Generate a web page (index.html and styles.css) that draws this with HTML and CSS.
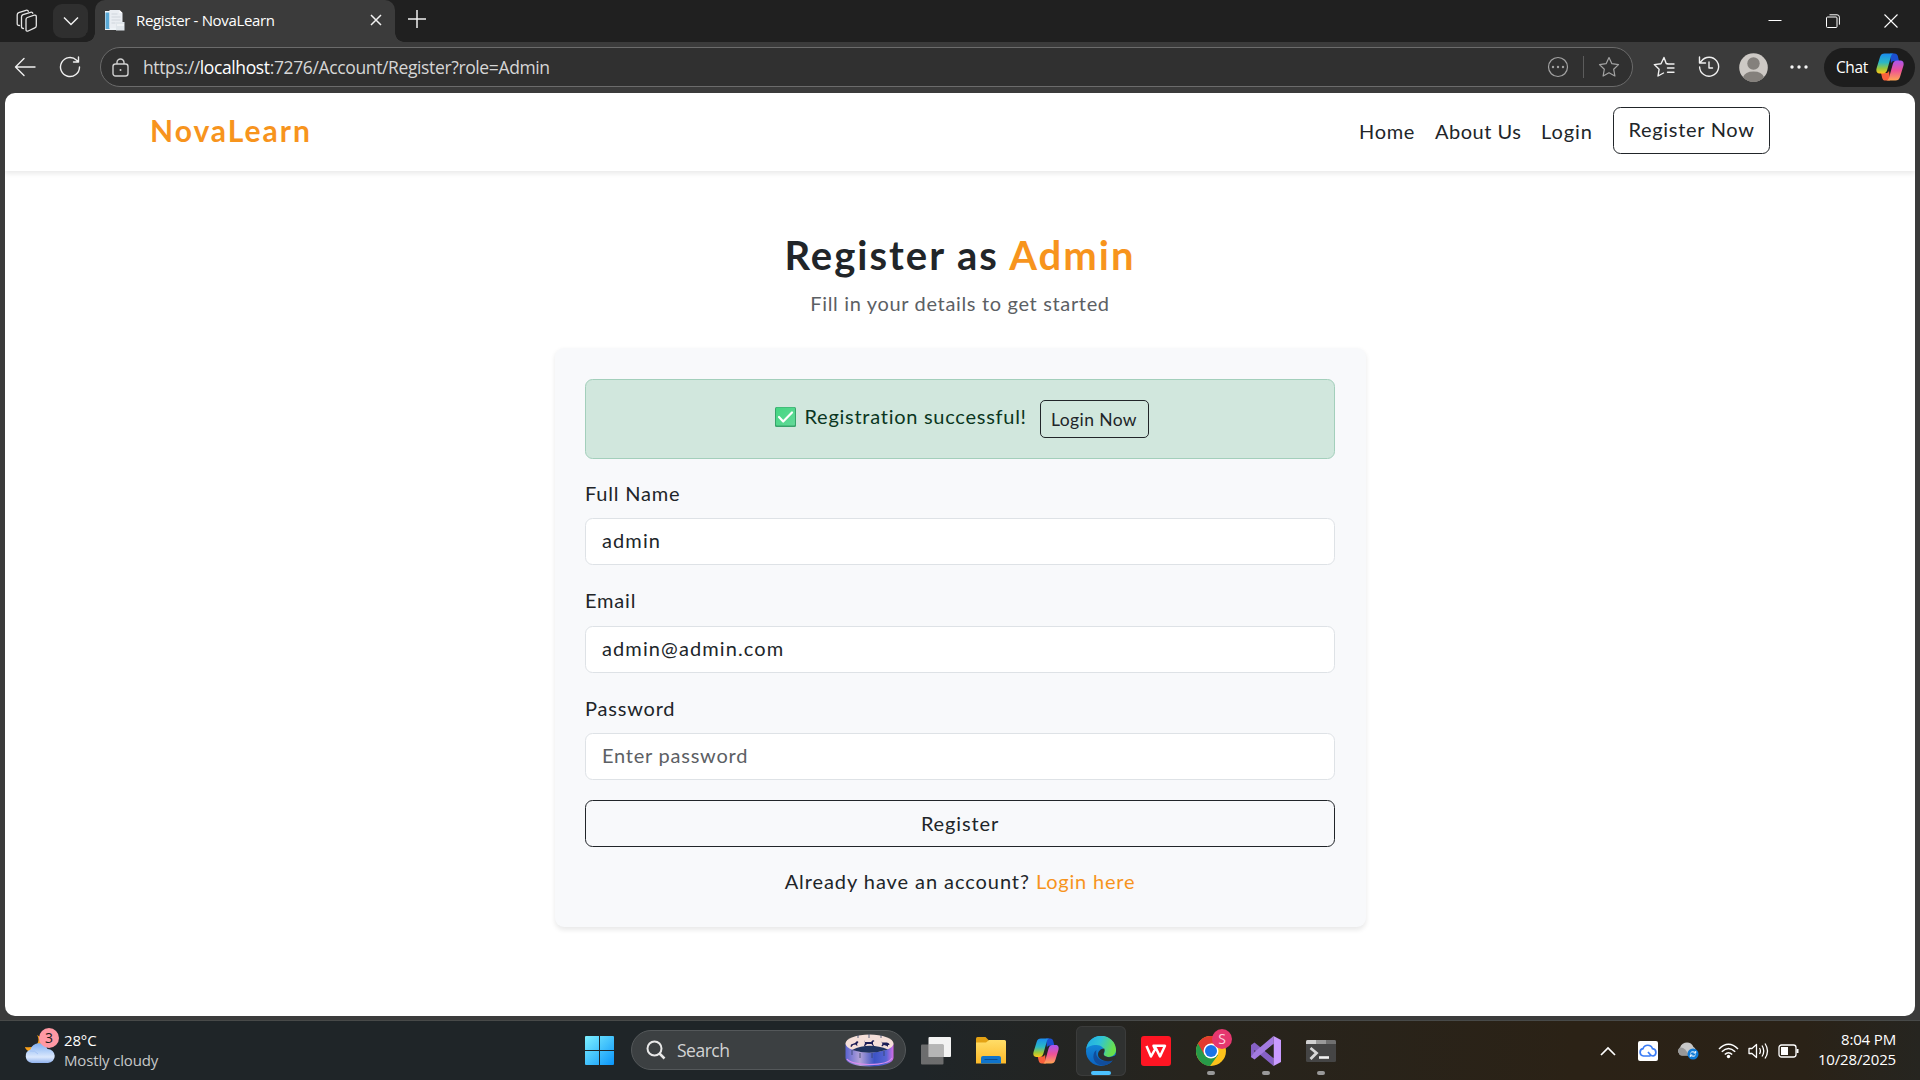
FILE: index.html
```html
<!DOCTYPE html>
<html lang="en">
<head>
<meta charset="utf-8">
<title>Register - NovaLearn</title>
<link rel="stylesheet" href="styles.css">
</head>
<body>
<svg class="defs" width="0" height="0" aria-hidden="true">
  <defs>
    <linearGradient id="cpA" x1="0" y1="0" x2="0" y2="1"><stop offset="0" stop-color="#1a8cf0"/><stop offset=".45" stop-color="#2bb8c4"/><stop offset=".75" stop-color="#9bc83c"/><stop offset="1" stop-color="#ffc61a"/></linearGradient>
    <linearGradient id="cpB" x1="0" y1="0" x2="0" y2="1"><stop offset="0" stop-color="#a855f0"/><stop offset=".5" stop-color="#ee5296"/><stop offset="1" stop-color="#ffa552"/></linearGradient>
    <symbol id="copilot" viewBox="0 0 28 28">
      <path d="M14 0.5h4.5c2 0 2.800 1 3.300 2.600L23 8h-4.500c-2 0-3 .8-3.500 2.600z" fill="#1b4fd0"/>
      <path d="M14 27.500H9.500c-2 0-2.800-1-3.300-2.600L5 20h4.500c2 0 3-.8 3.500-2.600z" fill="#f9603c"/>
      <path d="M8.500 .5H18c-1.700 0-2.500 1.200-3 2.800L11.300 16.500C10.600 19 9.300 20.500 7 20.500H3.500C.8 20.500-.2 18 .6 15.200L4 4C4.700 1.600 6.200 .5 8.500 .5z" fill="url(#cpA)"/>
      <path d="M19.500 27.500H10c1.700 0 2.500-1.200 3-2.800L16.700 11.500C17.400 9 18.700 7.500 21 7.500h3.500c2.700 0 3.700 2.500 2.900 5.300L24 24c-.7 2.400-2.200 3.500-4.500 3.500z" fill="url(#cpB)"/>
    </symbol>
    <linearGradient id="edgeA" x1="0" y1="0" x2="1" y2=".3"><stop offset="0" stop-color="#1fa8e8"/><stop offset=".5" stop-color="#2fc3d8"/><stop offset="1" stop-color="#69e04c"/></linearGradient>
    <linearGradient id="edgeB" x1="0" y1="0" x2="0" y2="1"><stop offset="0" stop-color="#1595e0"/><stop offset="1" stop-color="#0b62c0"/></linearGradient>
    <linearGradient id="win" x1="0" y1="0" x2="1" y2="1"><stop offset="0" stop-color="#7df0ff"/><stop offset="1" stop-color="#0a95fa"/></linearGradient>
    <linearGradient id="fold" x1="0" y1="0" x2="0" y2="1"><stop offset="0" stop-color="#ffdd68"/><stop offset="1" stop-color="#fcb928"/></linearGradient>
    <linearGradient id="cloud" x1="0" y1="0" x2="0" y2="1"><stop offset="0" stop-color="#7fb0f3"/><stop offset=".7" stop-color="#dbe8fc"/><stop offset="1" stop-color="#8fb2ee"/></linearGradient>
    <linearGradient id="ring" x1="0" y1="0" x2="1" y2="0"><stop offset="0" stop-color="#5a63d0"/><stop offset=".3" stop-color="#b3a2d8"/><stop offset=".6" stop-color="#3c53c4"/><stop offset=".85" stop-color="#5866d4"/><stop offset="1" stop-color="#d36ce8"/></linearGradient>
    <linearGradient id="check" x1="0" y1="0" x2="1" y2="1"><stop offset="0" stop-color="#43d681"/><stop offset="1" stop-color="#63d999"/></linearGradient>
  </defs>
</svg>

<div class="tabstrip">
  <button class="strip-btn workspaces" aria-label="Workspaces">
    <svg width="22" height="26" viewBox="0 0 22 26" fill="none" stroke="#e4e4e4" stroke-width="1.300" stroke-linejoin="round" stroke-linecap="round"><path d="M10 11.500c0-1 .4-1.600 1.300-2l7-2.300c1.200-.3 2 .3 2 1.500v9c0 1-.5 1.700-1.500 2.100l-6.600 3.200c-1.200.5-2.200 0-2.200-1.300z"/><path d="M7.500 20.500c-1.200 0-2-.6-2-1.700V9c0-1.200.5-1.900 1.500-2.300l7.500-2.400c1.200-.3 2 0 2.300 1M3.500 17.500c-1.700 0-2.300-.6-2.300-1.700V7c0-1.200.5-1.900 1.500-2.300L10 2.300c1.200-.3 2 0 2.300 1"/></svg>
  </button>
  <button class="strip-btn tab-menu" aria-label="Tab actions">
    <svg width="18" height="12" viewBox="0 0 18 12" fill="none" stroke="#f0f0f0" stroke-width="1.500"><path d="M2 2.500l7 7 7-7"/></svg>
  </button>
  <div class="tab">
    <svg class="favicon" width="21" height="21" viewBox="0 0 21 21"><path d="M1 1h14v19H1z" fill="#eef3f7"/><path d="M1.500 2.500h4V19h-4z" fill="#5aa9d6"/><path d="M5.500 0h10l3 3v15h-13z" fill="#e9edf2"/><path d="M15.500 0v3h3z" fill="#fff"/><path d="M7.500 4h6M7.500 7h9M7.500 10h9M7.500 13h4" stroke="#cfd5dc"/><path d="M12 12h8.500v8.500H12z" fill="#dfe5ea"/><path d="M13 15h7" stroke="#fff"/></svg>
    <span class="tab-title">Register - NovaLearn</span>
    <svg class="tab-close" width="12" height="12" viewBox="0 0 12 12" stroke="#f2f2f2" stroke-width="1.500"><path d="M1 1l10 10M11 1L1 11"/></svg>
  </div>
  <svg class="new-tab" width="18" height="18" viewBox="0 0 18 18" stroke="#f0f0f0" stroke-width="1.500"><path d="M9 0v18M0 9h18"/></svg>
  <div class="window-controls">
    <svg width="14" height="14" viewBox="0 0 14 14" stroke="#fff"><path d="M.5 6.500h13"/></svg>
    <svg width="14" height="14" viewBox="0 0 14 14" fill="none" stroke="#fff"><rect x=".5" y="3" width="10.500" height="10.500" rx="1"/><path d="M3.500 .8h7.500q2.400 0 2.400 2.400v7.500"/></svg>
    <svg width="14" height="14" viewBox="0 0 14 14" stroke="#fff" stroke-width="1.100"><path d="M.5 .5l13 13M13.500 .5l-13 13"/></svg>
  </div>
</div>

<div class="toolbar">
  <div class="tool back"><svg width="22" height="20" viewBox="0 0 22 20" fill="none" stroke="#f0f0f0" stroke-width="1.400" stroke-linecap="round" stroke-linejoin="round"><path d="M21 10H1.500M10 1.500L1.500 10l8.500 8.500"/></svg></div>
  <div class="tool reload"><svg width="22" height="22" viewBox="0 0 22 22" fill="none" stroke="#f0f0f0" stroke-width="1.400" stroke-linecap="round" stroke-linejoin="round"><path d="M20.500 11A9.500 9.500 0 1 1 17.600 4.200L19.500 6M19.500 1v5h-5"/></svg></div>
  <div class="address">
    <svg width="17" height="19" viewBox="0 0 17 19" fill="none" stroke="#d0d0d0" stroke-width="1.400"><rect x="1" y="6" width="15" height="12" rx="2.500"/><path d="M5 6V4.500a3.500 3.500 0 0 1 7 0V6"/><circle cx="8.500" cy="12" r="1" fill="#d0d0d0" stroke="none"/></svg>
    <span class="url">https://<b>localhost</b>:7276/Account/Register?role=Admin</span>
    <svg class="more-circle" width="22" height="22" viewBox="0 0 22 22" fill="none" stroke="#a3a3a3" stroke-width="1.200"><circle cx="11" cy="11" r="9.500"/><g fill="#a3a3a3" stroke="none"><circle cx="6" cy="11" r="1.200"/><circle cx="11" cy="11" r="1.200"/><circle cx="16" cy="11" r="1.200"/></g></svg>
    <span class="divider"></span>
    <svg width="22" height="22" viewBox="0 0 22 22" fill="none" stroke="#a3a3a3" stroke-width="1.200" stroke-linejoin="round"><path d="M11 1.500l2.900 6.200 6.600.9-4.800 4.700 1.200 6.700L11 16.800 5.100 20l1.200-6.700L1.500 8.600l6.600-.9z"/></svg>
  </div>
  <div class="tools">
    <div class="tool"><svg width="22" height="22" viewBox="0 0 22 22" fill="none" stroke="#f0f0f0" stroke-width="1.400" stroke-linejoin="round" stroke-linecap="round"><path d="M14.800 7.700l-1.500 0L11 1.500 8 7.700l-6.700.9 4.800 4.700L5 20l5.500-3M14.500 8h6.500M14.500 12H21M14.500 16.300H21"/></svg></div>
    <div class="tool"><svg width="22" height="22" viewBox="0 0 22 22" fill="none" stroke="#f0f0f0" stroke-width="1.400" stroke-linejoin="round" stroke-linecap="round"><path d="M1.600 11A9.500 9.500 0 1 0 3.500 5L2 6.500M1.500 1v6h6M11 6v6h3.500"/></svg></div>
    <div class="tool"><svg width="29" height="29" viewBox="0 0 29 29"><circle cx="14.500" cy="14.500" r="14.300" fill="#cdc9c5"/><circle cx="14.500" cy="10.500" r="6.200" fill="#84807c"/><path d="M4 24.300Q6 18.500 14.500 18.500T25 24.300A14.300 14.300 0 0 1 4 24.300z" fill="#84807c"/></svg></div>
    <div class="tool"><svg width="18" height="4" viewBox="0 0 18 4" fill="#f5f5f5"><circle cx="2" cy="2" r="1.700"/><circle cx="9" cy="2" r="1.700"/><circle cx="16" cy="2" r="1.700"/></svg></div>
  </div>
  <div class="chat"><span>Chat</span><svg width="28" height="28"><use href="#copilot"/></svg></div>
</div>

<main class="page">
  <header class="site-header">
    <a class="brand">NovaLearn</a>
    <nav class="nav">
      <a class="nav-home">Home</a>
      <a class="nav-about">About Us</a>
      <a class="nav-login">Login</a>
      <a class="btn nav-register">Register Now</a>
    </nav>
  </header>
  <section class="register">
    <h1>Register as <span>Admin</span></h1>
    <p class="lead">Fill in your details to get started</p>
    <form class="card">
      <div class="alert">
        <svg width="21" height="20" viewBox="0 0 21 20"><rect width="21" height="20" rx="1.500" fill="#38a36b"/><rect x="1" y=".5" width="19" height="18" rx="1" fill="url(#check)"/><path d="M4 10l4.200 4.500L17 5.500" fill="none" stroke="#fff" stroke-width="2.200" stroke-linecap="round" stroke-linejoin="round"/></svg>
        <span class="alert-text">Registration successful!</span>
        <a class="btn btn-sm">Login Now</a>
      </div>
      <label class="l-name">Full Name</label>
      <div class="field f-name">admin</div>
      <label class="l-email">Email</label>
      <div class="field f-email">admin@admin.com</div>
      <label class="l-pass">Password</label>
      <div class="field placeholder">Enter password</div>
      <a class="btn submit">Register</a>
      <p class="have-account"><span>Already have an account?</span> <a>Login here</a></p>
    </form>
  </section>
</main>

<footer class="taskbar">
  <div class="weather">
    <div class="weather-icon">
      <svg width="30" height="30" viewBox="0 0 30 30"><path d="M12 1c4 6 0 14-12 12 1 5 8 6 14 3s7-11-2-15z" fill="#f9a11b"/><path d="M7 29a7 7 0 0 1-1.500-13.600A9 9 0 0 1 22.500 15 7 7 0 0 1 23 29z" fill="url(#cloud)"/><path d="M5 17q5-1 8 3" stroke="#a5c4f5" fill="none"/></svg>
      <span class="badge">3</span>
    </div>
    <div class="weather-text"><span class="temp">28°C</span><span class="sky">Mostly cloudy</span></div>
  </div>
  <svg class="start" width="29" height="29" viewBox="0 0 29 29" fill="url(#win)"><path d="M1 0h13v14H0V1q0-1 1-1zM15 0h13q1 0 1 1v13H15zM0 15h14v14H1q-1 0-1-1zM15 15h14v13q0 1-1 1H15z"/></svg>
  <div class="search">
    <svg width="20" height="20" viewBox="0 0 20 20" fill="none" stroke="#e8e8e8" stroke-width="2"><circle cx="8.500" cy="8.500" r="7"/><path d="M13.500 13.500l5 5" stroke-width="2.500"/></svg>
    <span>Search</span>
    <svg class="carousel" width="49" height="33" viewBox="0 0 49 33"><path d="M.5 10v14c0 5 11 8.500 24 8.500s24-3.500 24-8.500V10z" fill="url(#ring)"/><path d="M2 25c4 7 40 8 45-1" fill="none" stroke="#d98cee" stroke-width="1.200"/><ellipse cx="24.500" cy="9.500" rx="24" ry="9" fill="#f5dfd9"/><path d="M7 16q17-8 36-.5-18 6-36 .5z" fill="#20335f"/><path d="M13 1v3M24 0v4M36 1v3M7 16v5M15 19v5M27 19v5M39 17v5" stroke="#334167" stroke-width=".8"/><path d="M19 6l1 2h6l2-2 1.500 1-1.500 1v2l1 2h-1l-1.500-2h-4.500L20 12h-1l1-3z" fill="#1c1d56"/><path d="M5 9l1 1.500 4-1.500 2-2 1.500 1-1.500 2 .5 2-1-.500-1-1-2.500.5-1.500 2-1-.5.500-2z" fill="#1c1d56"/><path d="M36 7l1 1.500h5l2 1 .5 1.500-1.500 0v2l-1-1-3-1-2 1.500-.5-1 1-1.500z" fill="#1c1d56"/></svg>
  </div>
  <div class="apps">
    <div class="app"><svg width="30" height="28" viewBox="0 0 30 28"><rect x="7.500" width="22.500" height="20" rx="1" fill="#f3f3f3"/><rect y="7.500" width="22.500" height="20" rx="1" fill="#777" opacity=".88"/><path d="M7.500 7.500h15V20h-15z" fill="#b5b5b5"/></svg></div>
    <div class="app"><svg width="30" height="27" viewBox="0 0 30 27"><path d="M0 1.500Q0 0 1.500 0h8L13 3.500V8H0z" fill="#e4a214"/><path d="M0 5.500h10L13 3h15.500Q30 3 30 4.500V26.500H0z" fill="url(#fold)"/><path d="M5 26.500V21q0-2 2-2h16q2 0 2 2v5.500z" fill="#0f74cc"/><path d="M8.500 22.500h13" stroke="#0a4d91"/></svg></div>
    <div class="app"><svg width="28" height="26" viewBox="0 0 28 26" preserveAspectRatio="none"><use href="#copilot" width="28" height="26"/></svg></div>
    <div class="app active"><svg width="30" height="30" viewBox="0 0 30 30"><circle cx="15" cy="15" r="15" fill="url(#edgeB)"/><path d="M.2 13A15 15 0 0 1 30 13c.5 5-3 8-7.500 8-3 0-5.500-1.200-4.500-3C20 14 16 9 10.500 9 5 9 1.500 11 .2 13z" fill="url(#edgeA)"/><path d="M10.500 14c-2 8 5 13.500 16.500 10C22 32 9 31 7.500 22c-.5-4 1-7 3-8z" fill="#114d9c"/><path d="M18.200 12.500c1.500 3-1.500 4.500-.2 6.500 1.500 2.200 6 3 10 1l3-1.500v3.500L27 24.500c-8 2-15-1-15-6 0-3 2.500-6 6.200-6z" fill="#2c2f2e"/></svg></div>
    <div class="app"><svg width="30" height="30" viewBox="0 0 30 30"><rect width="30" height="30" rx="3" fill="#fe1523"/><path d="M5.500 10L10 20.500 14.800 12l4.200 8.500L24 9.800H12.500l2 4.500" fill="none" stroke="#fff" stroke-width="2.500" stroke-linejoin="round"/></svg></div>
    <div class="app running"><svg width="30" height="30" viewBox="0 0 30 30"><circle cx="15" cy="15" r="15" fill="#fcc21b"/><path d="M15 15L2 7.500A15 15 0 0 0 14 30l8-11z" fill="#279a48"/><path d="M2 7.500A15 15 0 0 1 28 7.500H15L8.500 19z" fill="#e33b2e"/><circle cx="15" cy="15" r="7.500" fill="#fff"/><circle cx="15" cy="15" r="6" fill="#1a73e8"/></svg><span class="badge profile">S</span></div>
    <div class="app running"><svg width="30" height="30" viewBox="0 0 30 30"><path d="M0 9l3.500-2.500L22.500 22v8L3.500 14v8.500L0 21z" fill="#8661c5"/><path d="M0 21l3.500 2.500L22.500 8V0L3.500 16z" fill="#a37be0"/><path d="M22.500 0L30 4v22l-7.500 4z" fill="#c99bff"/><path d="M22.500 8v14L14 15z" fill="#292721"/></svg></div>
    <div class="app running"><svg width="30" height="22" viewBox="0 0 30 22"><rect width="30" height="22" rx="1.500" fill="#454545"/><path d="M0 4V1.500Q0 0 1.500 0H10v4z" fill="#d0d0d0"/><path d="M10 0h10v4H10z" fill="#999"/><path d="M20 0h8.500Q30 0 30 1.500V4H20z" fill="#707070"/><path d="M4.500 8l6 5-6 6" fill="none" stroke="#d8d8d8" stroke-width="2.800"/><path d="M13 17.500h10" stroke="#f2f2f2" stroke-width="2.600"/></svg></div>
  </div>
  <div class="tray">
    <svg width="16" height="10" viewBox="0 0 16 10" fill="none" stroke="#fff" stroke-width="1.700"><path d="M1 9l7-7 7 7"/></svg>
    <svg class="tray-cloud" width="20" height="20" viewBox="0 0 20 20"><rect width="20" height="20" rx="2" fill="#fff"/><path d="M12.500 15H5.500a3.700 3.700 0 0 1-.5-7.300 5 5 0 0 1 9.500 0A3.700 3.700 0 0 1 15 15c-1.500 0-2.500-.8-3.500-2.200L10 11" fill="none" stroke="#3b7cf5" stroke-width="1.700"/></svg>
    <svg class="tray-sync" width="21" height="18" viewBox="0 0 21 18"><path d="M4 13.500A4.500 4.500 0 0 1 2 5.500C4-.5 13-1.500 15.500 5c3 1 4 8.500-1 8.500z" fill="#c8c8c8"/><path d="M2 5.500q5-1 9 8H4A4.500 4.500 0 0 1 2 5.500z" fill="#989898"/><circle cx="15" cy="12" r="5.500" fill="#0f7bd8"/><path d="M12.300 11.300q1-2.300 4-1.300l1.300 1M17.700 9v2h-2M17.700 12.700q-1 2.300-4 1.300l-1.300-1M12.300 15v-2h2" fill="none" stroke="#fff"/></svg>
    <svg class="tray-wifi" width="21" height="16" viewBox="0 0 21 16" fill="none" stroke="#fff" stroke-width="1.500"><path d="M1 6q9.500-9.500 19 0M3.800 8.800q6.700-6.500 13.400 0M6.800 11.500q3.700-3.500 7.400 0"/><circle cx="10.500" cy="13.500" r="1.700" fill="#fff" stroke="none"/></svg>
    <svg class="tray-vol" width="21" height="18" viewBox="0 0 21 18" fill="none" stroke="#fff" stroke-width="1.300" stroke-linejoin="round"><path d="M1 6.500h3l4.500-4v13l-4.500-4H1zM11.500 6q1.800 3 0 6M14 3.500q3.500 5.500 0 11M17 1.500q5 7.500 0 15"/></svg>
    <svg class="tray-bat" width="21" height="14" viewBox="0 0 21 14" fill="none" stroke="#fff" stroke-width="1.300"><rect x="1" y="1" width="17" height="12" rx="2.500"/><path d="M3 3h7v8H3z" fill="#fff" stroke="none"/><path d="M19.500 5v4" stroke-width="2"/></svg>
    <div class="clock"><span class="time">8:04 PM</span><span class="date">10/28/2025</span></div>
  </div>
</footer>
</body>
</html>
```
FILE: styles.css
```css
* { box-sizing: border-box; }
body {
  margin: 0;
  width: 1920px;
  height: 1080px;
  overflow: hidden;
  display: flex;
  flex-direction: column;
  background: #3b3b3b;
  font-family: "Open Sans", "Noto Sans", sans-serif;
  color: #fff;
}
svg { display: block; flex: none; }
.defs { position: absolute; }
button { border: 0; padding: 0; background: none; }

/* browser tab strip */
.tabstrip {
  flex: none;
  height: 42px;
  background: #202020;
  display: flex;
  align-items: center;
}
.strip-btn { display: flex; align-items: center; justify-content: center; height: 34px; }
.workspaces { width: 36px; margin-left: 9px; }
.tab-menu { width: 35px; margin-left: 8px; background: #2f2f2f; border-radius: 9px; }
.tab {
  position: relative;
  width: 300px;
  height: 42px;
  margin-left: 7px;
  padding: 0 13px 2px 9px;
  background: #3b3b3b;
  border-radius: 10px 10px 0 0;
  display: flex;
  align-items: center;
}
.tab::before, .tab::after {
  content: "";
  position: absolute;
  bottom: 0;
  width: 9px;
  height: 9px;
}
.tab::before { left: -9px; background: radial-gradient(circle at 0 0, #202020 8.5px, #3b3b3b 9px); }
.tab::after { right: -9px; background: radial-gradient(circle at 100% 0, #202020 8.5px, #3b3b3b 9px); }
.tab-title { margin-left: 11px; padding-bottom: 1px; font-size: 15px; letter-spacing: -0.33px; white-space: nowrap; }
.tab-close { margin-left: auto; }
.new-tab { margin: 0 0 4px 13px; }
.window-controls { margin-left: auto; display: flex; gap: 44px; padding-right: 22px; }

/* browser toolbar */
.toolbar {
  flex: none;
  height: 51px;
  padding-bottom: 1px;
  display: flex;
  align-items: center;
}
.tool { width: 45px; display: flex; align-items: center; justify-content: center; }
.back { margin-left: 2px; }
.address {
  width: 1533px;
  height: 40px;
  margin-left: 8px;
  padding: 0 12px 0 11px;
  border: 1px solid #6b6b6b;
  border-radius: 20px;
  background: #303030;
  display: flex;
  align-items: center;
}
.url { margin-left: 14px; font-size: 17.5px; letter-spacing: -0.37px; color: #d6d6d6; white-space: nowrap; }
.url b { font-weight: 400; color: #fff; }
.more-circle { margin-left: auto; }
.divider { width: 1px; height: 22px; margin: 0 14px; background: #5c5c5c; }
.tools { display: flex; margin-left: 8px; }
.chat {
  width: 91px;
  height: 39px;
  margin-left: 3px;
  padding-left: 12px;
  border-radius: 20px;
  background: #1d1d1d;
  display: flex;
  align-items: center;
  gap: 8px;
  font-size: 15.5px;
  letter-spacing: -0.4px;
}
.chat span { width: 32px; }

/* NovaLearn page */
.page {
  flex: none;
  width: 1910px;
  height: 923px;
  margin: 0 5px;
  overflow: hidden;
  border-radius: 10px;
  background: #fff;
  color: #212529;
  font-family: Lato, "Open Sans", sans-serif;
  font-size: 20px;
  line-height: 30px;
}
.site-header {
  height: 78px;
  padding: 0 145px;
  display: flex;
  align-items: flex-start;
  justify-content: space-between;
  box-shadow: 0 2.5px 5px rgba(0, 0, 0, .09);
}
.brand { margin-top: 20px; color: #f7941d; font-size: 30px; line-height: 34px; font-weight: 700; letter-spacing: 2px; }
.nav { display: flex; padding-top: 14px; white-space: nowrap; }
.nav > a { margin-top: 9px; }
.nav-home { width: 76px; letter-spacing: .7px; }
.nav-about { width: 106px; letter-spacing: .5px; }
.nav-login { width: 72px; letter-spacing: .9px; }
.btn {
  display: block;
  border: 1px solid #212529;
  border-radius: 7.5px;
  text-align: center;
}
.nav > .nav-register { margin-top: 0; width: 157px; height: 47px; line-height: 42px; letter-spacing: .7px; }
.register { display: flex; flex-direction: column; align-items: center; padding-top: 60px; white-space: nowrap; }
h1 { margin: 0; font-size: 40px; line-height: 48px; font-weight: 700; letter-spacing: 2px; }
h1 span { color: #f7941d; }
.lead { margin: 9px 0 30px; color: #5c6064; letter-spacing: .66px; }
.card {
  width: 811px;
  height: 579px;
  padding: 31px 30.5px;
  border-radius: 9px;
  background: #f8f9fb;
  box-shadow: 0 2.5px 5px rgba(0, 0, 0, .09);
  display: flex;
  flex-direction: column;
}
.alert {
  flex: none;
  height: 80px;
  margin-bottom: 19px;
  padding-top: 20px;
  border: 1px solid #a3cfbb;
  border-radius: 7.5px;
  background: #d1e7dd;
  color: #0a3622;
  display: flex;
  justify-content: center;
}
.alert svg { margin: 7px 9px 0 3px; }
.alert-text { width: 235px; margin-top: 1px; letter-spacing: .73px; }
.btn-sm { width: 109px; height: 38px; color: #212529; font-size: 17.5px; line-height: 38px; border-radius: 5px; letter-spacing: .4px; }
.card label { flex: none; margin-bottom: 11px; height: 29.3px; letter-spacing: .8px; }
.field {
  flex: none;
  height: 47px;
  margin-bottom: 20px;
  padding: 0 15px 0 16px;
  border: 1px solid #dee2e6;
  border-radius: 7.5px;
  background: #fff;
  line-height: 43px;
  letter-spacing: 1.1px;
}
.field.placeholder { color: #5c6064; letter-spacing: .77px; }
.submit { flex: none; height: 47px; line-height: 44px; letter-spacing: .87px; }
.have-account { margin: 19px 0 0; text-align: center; letter-spacing: .93px; }
.have-account a { color: #f7941d; letter-spacing: .8px; }

/* Windows taskbar */
.taskbar {
  flex: none;
  height: 60px;
  margin-top: 4px;
  border-top: 1px solid #484a49;
  background: linear-gradient(90deg, #1f2528 0, #1f2528 48%, #27241d 62%, #2b2216 82%, #2a2217 94%, #262520 100%);
  display: flex;
  align-items: center;
}
.weather { width: 560px; padding-left: 25px; display: flex; gap: 9px; }
.weather-icon { position: relative; padding-top: 2px; }
.badge {
  position: absolute;
  left: 14px;
  top: -4px;
  width: 20px;
  height: 20px;
  border-radius: 50%;
  background: #ff99a4;
  color: #1b1b1b;
  font-size: 14px;
  line-height: 20px;
  text-align: center;
}
.weather-text, .clock { display: flex; flex-direction: column; margin-top: -4px; font-size: 15px; line-height: 20px; white-space: nowrap; }
.weather-text { letter-spacing: -0.15px; margin-top: -2px; }
.sky { color: #c6c8c9; }
.start { margin-left: 25px; }
.search {
  width: 275px;
  height: 40px;
  margin: 0 0 1px 17px;
  padding: 0 11px 0 14px;
  border: 1px solid #54585a;
  border-radius: 20px;
  background: #3c4042;
  color: #d2d3d4;
  display: flex;
  align-items: center;
  font-size: 17.5px;
  letter-spacing: -0.5px;
}
.search span { margin-left: 11px; }
.carousel { margin-left: auto; }
.apps { display: flex; gap: 5px; margin-left: 5px; }
.app {
  position: relative;
  width: 50px;
  height: 50px;
  display: flex;
  align-items: center;
  justify-content: center;
}
.active { background: #2f3130; border-radius: 6px; box-shadow: inset 0 0 0 1px #3b3c3b; }
.active::after, .running::after {
  content: "";
  position: absolute;
  bottom: 1px;
  left: 21px;
  width: 8px;
  height: 4px;
  border-radius: 2px;
  background: #999;
}
.active::after { left: 15px; width: 20px; background: #4cc2ff; }
.profile { left: 26px; top: 3px; background: #e5376f; color: #ffd5e0; }
.tray { margin-left: auto; padding-right: 24px; display: flex; align-items: center; }
.tray-cloud { margin-left: 22px; }
.tray-sync { margin-left: 20px; }
.tray-wifi { margin-left: 19px; }
.tray-vol { margin-left: 9px; }
.tray-bat { margin-left: 9px; }
.clock { margin-left: 19px; width: 78px; align-items: flex-end; letter-spacing: -0.15px; }
```
